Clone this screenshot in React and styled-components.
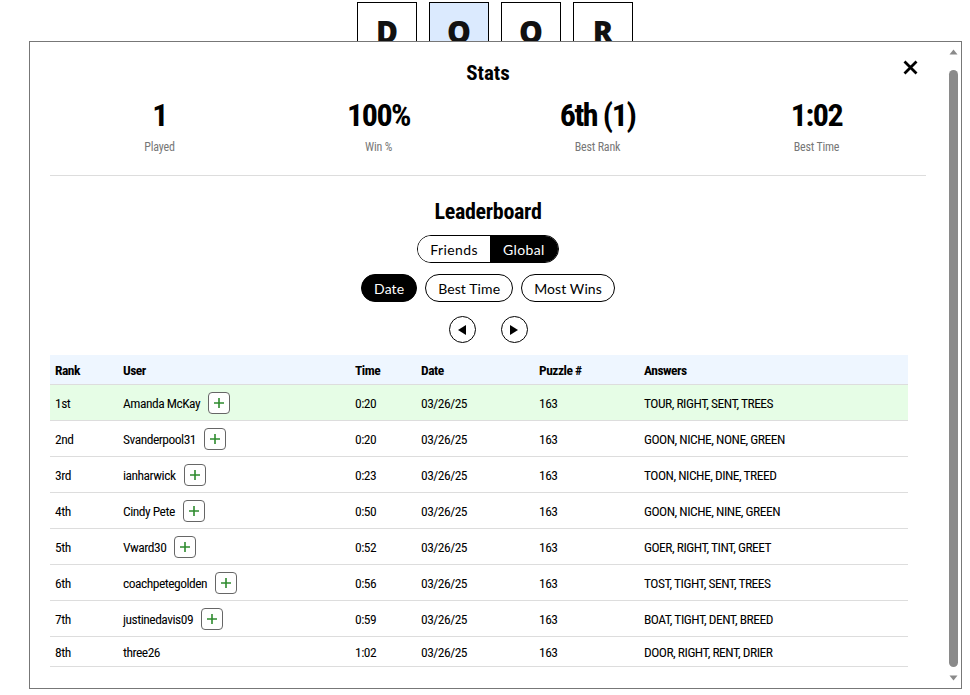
import React from "react";
import styled, { createGlobalStyle } from "styled-components";

const condensed = `"Roboto", "Liberation Sans", sans-serif`;
const round = `"Lato", "Noto Sans", sans-serif`;

const GlobalStyle = createGlobalStyle`
  body {
    margin: 0;
    background: #fff;
    font-family: ${condensed};
    font-stretch: 75%;
    color: #000;
  }
`;

const Page = styled.div`
  padding-left: 20px;
`;

const Board = styled.div`
  display: flex;
  justify-content: center;
  gap: 12px;
  padding-top: 2px;
`;

const Tile = styled.div`
  width: 58px;
  height: 58px;
  border: 1.5px solid #000;
  background: ${(p) => (p.$active ? "#dbeafe" : "#fff")};
  display: flex;
  justify-content: center;
  align-items: center;
  padding-bottom: 5px;
  box-sizing: content-box;
  font-family: "Open Sans", sans-serif;
  font-stretch: 100%;
  font-weight: 800;
  font-size: 30px;
  line-height: 1;
  color: #111;
`;

const Modal = styled.div`
  position: fixed;
  left: 29px;
  top: 41px;
  width: 933px;
  height: 648px;
  box-sizing: border-box;
  border: 1px solid #777;
  background: #fff;
  display: flex;
`;

const Scroller = styled.div`
  flex: 1;
  overflow: hidden;
`;

const Track = styled.div`
  width: 15px;
  display: flex;
  flex-direction: column;
  align-items: center;
  background: #fff;
`;

const Arrow = styled.div`
  height: 20px;
  flex: none;
  display: flex;
  align-items: center;
  justify-content: center;
`;

const Thumb = styled.div`
  flex: 1;
  width: 9px;
  margin: 8px 0 1px;
  border-radius: 5px;
  background: #8a8a8a;
`;

const Content = styled.div`
  position: relative;
  padding: 0 20px 46px;
`;

const Title = styled.h2`
  margin: ${(p) => p.$top || 0}px 0 0;
  padding-top: ${(p) => (p.$top ? 0 : 18)}px;
  text-align: center;
  font-weight: 700;
  font-size: ${(p) => p.$size || 21}px;
  letter-spacing: ${(p) => (p.$size ? -0.3 : 0)}px;
  line-height: 26px;
`;

const Close = styled.button`
  position: absolute;
  top: 18px;
  right: 28px;
  width: 15px;
  height: 15px;
  padding: 0;
  border: none;
  background: none;
  cursor: pointer;
`;

const StatsRow = styled.div`
  display: grid;
  grid-template-columns: repeat(4, 1fr);
  padding: 11px 0 20px;
  border-bottom: 1px solid #ddd;
`;

const Stat = styled.div`
  display: flex;
  flex-direction: column;
  align-items: center;
`;

const StatValue = styled.div`
  font-weight: 700;
  font-size: 32px;
  letter-spacing: -1.5px;
  line-height: 36px;
`;

const StatLabel = styled.div`
  margin-top: 6px;
  font-size: 12px;
  letter-spacing: -0.2px;
  line-height: 16px;
  color: #777;
`;

const Segmented = styled.div`
  display: flex;
  justify-content: center;
  margin-top: 10px;
`;

const SegGroup = styled.div`
  display: flex;
  border: 1px solid #000;
  border-radius: 14px;
  overflow: hidden;
`;

const Seg = styled.button`
  height: 26px;
  padding: 0 ${(p) => p.$pad}px;
  border: none;
  background: ${(p) => (p.$on ? "#000" : "#fff")};
  color: ${(p) => (p.$on ? "#fff" : "#000")};
  font-family: ${round};
  font-size: 14px;
  letter-spacing: 0.4px;
  cursor: pointer;
`;

const SortRow = styled.div`
  display: flex;
  justify-content: center;
  gap: 8px;
  margin-top: 11px;
`;

const Pill = styled.button`
  height: 28px;
  padding: 0 12px;
  border: 1px solid #000;
  border-radius: 14px;
  background: ${(p) => (p.$on ? "#000" : "#fff")};
  color: ${(p) => (p.$on ? "#fff" : "#000")};
  font-family: ${round};
  font-size: 14px;
  letter-spacing: 0.1px;
  cursor: pointer;
`;

const NavRow = styled.div`
  display: flex;
  justify-content: center;
  gap: 25px;
  margin-top: 14px;
`;

const NavBtn = styled.button`
  width: 27px;
  height: 27px;
  padding: 0;
  border: 1px solid #000;
  border-radius: 50%;
  background: #fff;
  display: flex;
  align-items: center;
  justify-content: center;
  cursor: pointer;
`;

const Table = styled.table`
  width: 98%;
  margin-top: 12px;
  border-collapse: collapse;
  font-size: 13.5px;
  letter-spacing: -0.5px;
`;

const Th = styled.th`
  text-align: left;
  padding: 7px 5px 6px;
  line-height: 16px;
  font-weight: 700;
  background: #eef6ff;
  border-bottom: 1px solid #ddd;
`;

const Tr = styled.tr`
  background: ${(p) => (p.$me ? "#e6fde6" : "#fff")};
  border-bottom: 1px solid #ddd;
`;

const Td = styled.td`
  padding: 7px 5px 6px;
  line-height: 16px;
  vertical-align: middle;
`;

const UserCell = styled.div`
  display: flex;
  align-items: center;
  gap: 8px;
`;

const AddBtn = styled.button`
  width: 22px;
  height: 22px;
  padding: 0;
  border: 1px solid #666;
  border-radius: 4px;
  background: #fff;
  display: flex;
  align-items: center;
  justify-content: center;
  cursor: pointer;
`;

const stats = [
  ["1", "Played"],
  ["100%", "Win %"],
  ["6th (1)", "Best Rank"],
  ["1:02", "Best Time"],
];

const rows = [
  ["1st", "Amanda McKay", "0:20", "TOUR, RIGHT, SENT, TREES", true],
  ["2nd", "Svanderpool31", "0:20", "GOON, NICHE, NONE, GREEN", true],
  ["3rd", "ianharwick", "0:23", "TOON, NICHE, DINE, TREED", true],
  ["4th", "Cindy Pete", "0:50", "GOON, NICHE, NINE, GREEN", true],
  ["5th", "Vward30", "0:52", "GOER, RIGHT, TINT, GREET", true],
  ["6th", "coachpetegolden", "0:56", "TOST, TIGHT, SENT, TREES", true],
  ["7th", "justinedavis09", "0:59", "BOAT, TIGHT, DENT, BREED", true],
  ["8th", "three26", "1:02", "DOOR, RIGHT, RENT, DRIER", false],
];

const Plus = () => (
  <svg width="12" height="12" viewBox="0 0 12 12">
    <path d="M6 1v10M1 6h10" stroke="#2e8b2e" strokeWidth="1.6" />
  </svg>
);

const App = () => (
  <Page>
    <GlobalStyle />
    <Board>
      {["D", "O", "O", "R"].map((l, i) => (
        <Tile key={i} $active={i === 1}>{l}</Tile>
      ))}
    </Board>
    <Modal>
      <Scroller>
        <Content>
          <Title>Stats</Title>
          <Close aria-label="close">
            <svg width="15" height="15" viewBox="0 0 15 15">
              <path d="M1.5 1.5l12 12M13.5 1.5l-12 12" stroke="#000" strokeWidth="2.8" />
            </svg>
          </Close>
          <StatsRow>
            {stats.map(([v, l]) => (
              <Stat key={l}>
                <StatValue>{v}</StatValue>
                <StatLabel>{l}</StatLabel>
              </Stat>
            ))}
          </StatsRow>

          <Title $size={22} $top={23}>Leaderboard</Title>
          <Segmented>
            <SegGroup>
              <Seg $pad={12}>Friends</Seg>
              <Seg $pad={13} $on>Global</Seg>
            </SegGroup>
          </Segmented>
          <SortRow>
            <Pill $on>Date</Pill>
            <Pill>Best Time</Pill>
            <Pill>Most Wins</Pill>
          </SortRow>
          <NavRow>
            <NavBtn aria-label="previous">
              <svg width="10" height="12" viewBox="0 0 10 12">
                <path d="M9 1L1 6l8 5z" fill="#000" />
              </svg>
            </NavBtn>
            <NavBtn aria-label="next">
              <svg width="10" height="12" viewBox="0 0 10 12">
                <path d="M1 1l8 5-8 5z" fill="#000" />
              </svg>
            </NavBtn>
          </NavRow>

          <Table>
            <colgroup>
              <col style={{ width: 68 }} />
              <col style={{ width: 232 }} />
              <col style={{ width: 66 }} />
              <col style={{ width: 118 }} />
              <col style={{ width: 105 }} />
              <col />
            </colgroup>
            <thead>
              <tr>
                <Th>Rank</Th>
                <Th>User</Th>
                <Th>Time</Th>
                <Th>Date</Th>
                <Th>Puzzle #</Th>
                <Th>Answers</Th>
              </tr>
            </thead>
            <tbody>
              {rows.map(([rank, user, time, answers, add], i) => (
                <Tr key={rank} $me={i === 0}>
                  <Td>{rank}</Td>
                  <Td>
                    <UserCell>
                      {user}
                      {add && (
                        <AddBtn aria-label="add friend">
                          <Plus />
                        </AddBtn>
                      )}
                    </UserCell>
                  </Td>
                  <Td>{time}</Td>
                  <Td>03/26/25</Td>
                  <Td>163</Td>
                  <Td>{answers}</Td>
                </Tr>
              ))}
            </tbody>
          </Table>
        </Content>
      </Scroller>
      <Track aria-hidden="true">
        <Arrow>
          <svg width="9" height="6" viewBox="0 0 9 6">
            <path d="M0.5 5.5L4.5 0.5l4 5z" fill="#8a8a8a" />
          </svg>
        </Arrow>
        <Thumb />
        <Arrow>
          <svg width="9" height="6" viewBox="0 0 9 6">
            <path d="M0.5 0.5h8l-4 5z" fill="#8a8a8a" />
          </svg>
        </Arrow>
      </Track>
    </Modal>
  </Page>
);

export default App;
